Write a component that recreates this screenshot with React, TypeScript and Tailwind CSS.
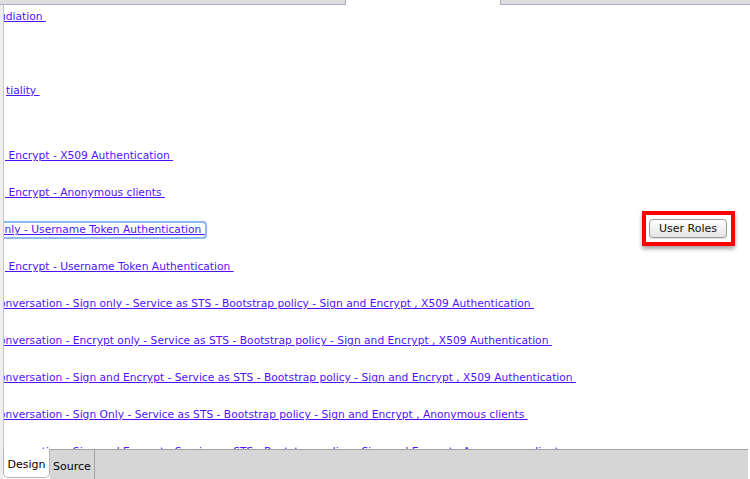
import React from "react";

const font = { fontFamily: '"DejaVu Sans", "Liberation Sans", sans-serif' };

function Link({ text, className = "" }: { text: string; className?: string }) {
  return (
    <a
      href="#"
      className={`text-[#4f12ff] underline underline-offset-[1px] decoration-[1px] whitespace-pre ${className}`}
    >
      {text}
    </a>
  );
}

export default function App() {
  const rowCls = "h-[14px] leading-[14px] flex items-center justify-between shrink-0";
  const conv = [
    "onversation - Sign only - Service as STS - Bootstrap policy - Sign and Encrypt , X509 Authentication ",
    "onversation - Encrypt only - Service as STS - Bootstrap policy - Sign and Encrypt , X509 Authentication ",
    "onversation - Sign and Encrypt - Service as STS - Bootstrap policy - Sign and Encrypt , X509 Authentication ",
    "onversation - Sign Only - Service as STS - Bootstrap policy - Sign and Encrypt , Anonymous clients ",
    "onversation - Sign and Encrypt - Service as STS - Bootstrap policy - Sign and Encrypt , Anonymous clients ",
  ];
  return (
    <div className="w-[750px] h-[479px] flex flex-col bg-white overflow-hidden" style={font}>
      {/* top tab strip */}
      <div className="h-[5px] flex shrink-0">
        <div className="w-[346px] bg-[#dedede] border-b border-r border-[#a8afc6]" />
        <div className="w-[154px] bg-white" />
        <div className="flex-1 bg-[#dedede] border-b border-l border-[#a8afc6]" />
      </div>

      {/* main */}
      <div className="flex flex-1 min-h-0">
        <div className="w-[3px] bg-[#eeeeee] border-r border-[#c6c6c6] shrink-0 box-content" />
        <div className="flex-1 min-w-0 overflow-hidden flex flex-col pr-[15px] text-[10.7px]">
          <div className={`${rowCls} mt-[5px]`}>
            <Link text="udiation " className="-ml-[5px]" />
          </div>
          <div className={`${rowCls} mt-[60px]`}>
            <Link text="tiality " className="ml-[2px]" />
          </div>
          <div className={`${rowCls} mt-[51px]`}>
            <Link text=" Encrypt - X509 Authentication " className="ml-[1px]" />
          </div>
          <div className={`${rowCls} mt-[23px]`}>
            <Link text=" Encrypt - Anonymous clients " className="ml-[1px]" />
          </div>
          <div className={`${rowCls} mt-[23px]`}>
            <Link
              text="only - Username Token Authentication "
              className="-ml-[6px] rounded-[2px] outline outline-[2px] outline-[#8db9f0] outline-offset-[0px] shadow-[0_0_2px_1px_rgba(120,170,235,0.6)]"
            />
            <div className="mb-[4px] border-[4px] border-[#ff0000] px-[3px] py-[4px] pr-[4px] shadow-[0_3px_4px_rgba(0,0,0,0.35)] bg-white">
              <button className="w-[78px] h-[19px] rounded-[4px] border border-[#9c9c9c] bg-gradient-to-b from-white to-[#e4e4e4] text-[11px] leading-[17px] text-[#111] shadow-[0_1px_1px_rgba(0,0,0,0.15)]">
                User Roles
              </button>
            </div>
          </div>
          <div className={`${rowCls} mt-[23px]`}>
            <Link text=" Encrypt - Username Token Authentication " className="ml-[1px]" />
          </div>
          {conv.map((t) => (
            <div key={t} className={`${rowCls} mt-[23px]`}>
              <Link text={t} className="-ml-[5px]" />
            </div>
          ))}
        </div>
      </div>

      {/* bottom tabs */}
      <div className="h-[30px] flex shrink-0 text-[11px] text-black">
        <div className="w-[3px] bg-[#eeeeee] shrink-0" />
        <div className="w-[47px] h-[29px] bg-white border-l border-r border-b border-[#b4b4b4] rounded-b-[5px] flex items-center justify-center pt-[5px] shrink-0">
          Design
        </div>
        <div className="w-[45px] bg-[#d6d6d6] border-t border-r border-[#a2a2a2] flex items-center justify-center pt-[5px] shrink-0">
          Source
        </div>
        <div className="flex-1 bg-[#d6d6d6] border-t border-[#a2a2a2]" />
        <div className="w-[2px] bg-white shrink-0" />
      </div>
    </div>
  );
}
